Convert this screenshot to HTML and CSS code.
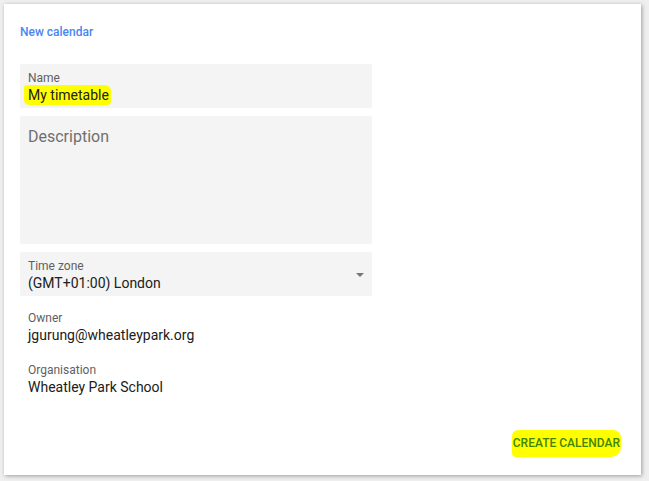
FILE: index.html
```html
<!DOCTYPE html>
<html>
<head>
<meta charset="utf-8">
<link rel="stylesheet" href="styles.css">
</head>
<body>
<div class="card">
  <div class="title">New calendar</div>
  <div class="fields">
    <div class="field short name">
      <div class="label">Name</div>
      <div class="value"><span class="hl-name">My timetable</span></div>
    </div>
    <div class="field desc">
      <div class="placeholder">Description</div>
    </div>
    <div class="field short select">
      <div class="select-text">
        <div class="label">Time zone</div>
        <div class="value">(GMT+01:00) London</div>
      </div>
      <svg class="arrow" width="8" height="4" viewBox="0 0 8 4"><path d="M0 0h8L4 4z" fill="#757575"/></svg>
    </div>
  </div>
  <div class="info first">
    <div class="label">Owner</div>
    <div class="value">jgurung@wheatleypark.org</div>
  </div>
  <div class="info">
    <div class="label">Organisation</div>
    <div class="value">Wheatley Park School</div>
  </div>
  <div class="footer">
    <span class="btn">CREATE CALENDAR</span>
  </div>
</div>
</body>
</html>
```

FILE: styles.css
```css
html, body {
  margin: 0;
  padding: 0;
}
body {
  background: #efefef;
  font-family: Roboto, "Liberation Sans", Arial, sans-serif;
  width: 649px;
  height: 481px;
  overflow: hidden;
}
.card {
  margin: 4px 0 0 4px;
  width: 637px;
  height: 471px;
  background: #fff;
  box-shadow: 1px 1px 4px rgba(0,0,0,0.35);
  box-sizing: border-box;
  padding: 20px 16px 0 16px;
  display: flex;
  flex-direction: column;
}
.title {
  color: #4a86f3;
  font-size: 12px;
  font-weight: 500;
  line-height: 16px;
}
.fields {
  margin-top: 24px;
  width: 352px;
  display: flex;
  flex-direction: column;
  gap: 8px;
}
.field {
  background: #f4f4f4;
  border-radius: 2px;
  box-sizing: border-box;
  padding: 6px 8px 0 8px;
}
.short {
  height: 44px;
}
.desc {
  height: 128px;
  padding-top: 11px;
}
.placeholder {
  font-size: 16px;
  line-height: 20px;
  color: #6f6f6f;
}
.label {
  font-size: 12px;
  line-height: 16px;
  color: #5f5f5f;
}
.value {
  font-size: 14px;
  line-height: 18px;
  color: #202020;
}
.hl-name {
  background: #ffff00;
  border-radius: 3px 6px 4px 5px;
  padding: 2px 2px 2px 4px;
  margin-left: -4px;
}
.select {
  display: flex;
  align-items: center;
  justify-content: space-between;
  padding-top: 0;
  padding-right: 8px;
}
.select-text {
  padding-top: 2px;
}
.arrow {
  margin-top: 2px;
}
.info {
  padding-left: 8px;
  margin-top: 18px;
}
.info.first {
  margin-top: 14px;
}
.footer {
  margin-top: auto;
  margin-bottom: 18px;
  display: flex;
  justify-content: flex-end;
  padding-right: 4px;
}
.btn {
  background: #ffff00;
  color: #428500;
  font-size: 12px;
  font-weight: 500;
  line-height: 16px;
  padding: 5px 1px 6px 1px;
  border-radius: 6px 8px 10px 4px;
}
```
